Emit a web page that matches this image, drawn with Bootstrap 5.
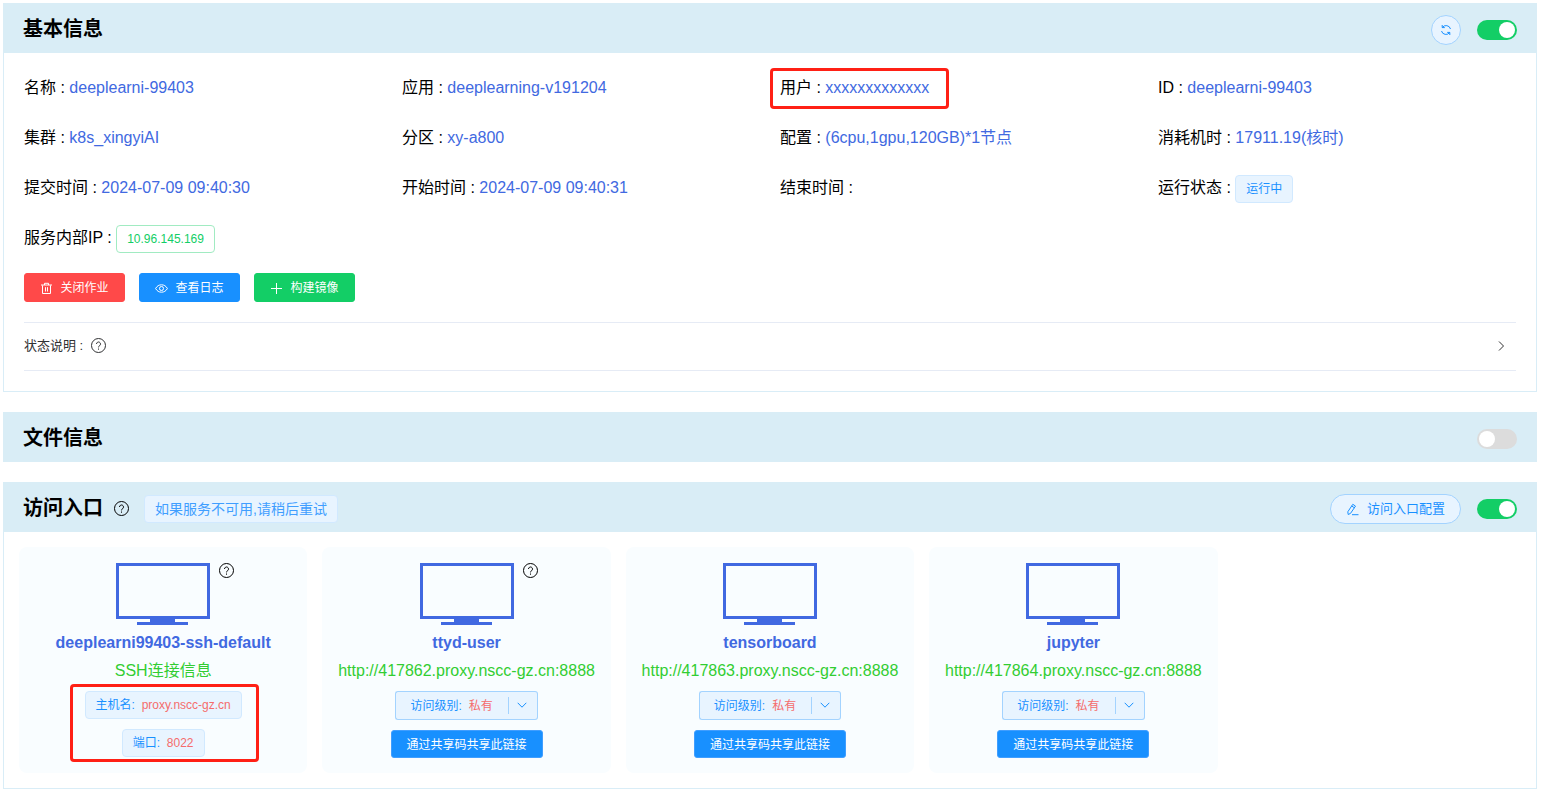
<!DOCTYPE html>
<html lang="zh-CN">
<head>
<meta charset="utf-8">
<meta name="viewport" content="width=device-width, initial-scale=1">
<title>作业详情</title>
<link href="https://cdn.jsdelivr.net/npm/bootstrap@5.3.0/dist/css/bootstrap.min.css" rel="stylesheet">
<style>
  :root { --blue: #1890ff; --royal: #4169e1; --line: #d9edf7; }
  body { font-family: "Liberation Sans", "Noto Sans CJK SC", sans-serif; font-size: 16px; color: #000; padding: 3px 4px 3px 3px; }
  a { text-decoration: none; }
  .panel { margin-bottom: 20px; }
  .panel-head { background: #d9edf6; min-height: 50px; padding: 0 20px; }
  .panel-head h2 { font-size: 20px; line-height: 48px; padding-top: 2px; font-weight: 700; margin: 0; }
  .panel-body { border: 1px solid var(--line); border-top: 0; }
  .head-tools { padding-top: 4px; gap: 16px; }

  .form-check-input.toggle { width: 40px; height: 20px; margin: 0; border: 0; border-radius: 10px; background-color: #dcdcdc; background-size: 20px 20px; background-position: left center; background-repeat: no-repeat;
    background-image: url("data:image/svg+xml,%3csvg xmlns='http://www.w3.org/2000/svg' viewBox='0 0 20 20'%3e%3ccircle cx='10' cy='10' r='8' fill='%23fff'/%3e%3c/svg%3e"); }
  .form-check-input.toggle:checked { background-color: #13ce66; background-position: right center; }

  .info { padding: 10px 20px 20px; }
  .info-grid { --bs-gutter-x: 20px; line-height: 50px; }
  .val { color: var(--royal); }
  .chip { display: inline-block; font-size: 12px; line-height: 26px; padding: 0 10px; border: 1px solid #d1e9ff; border-radius: 4px; background: #e8f4ff; color: var(--blue); white-space: nowrap; }
  .chip-ok { background: #fff; border-color: #a1ebc2; color: #13ce66; }
  .chip-hint { font-size: 14px; line-height: 26px; padding: 0 10px; color: #409eff; }
  .red { color: #f56c6c; }

  .actions { gap: 14px; padding-top: 10px; }
  .act { --c: var(--blue); display: inline-flex; align-items: center; justify-content: center; gap: 7px; font-size: 12px; line-height: 25px; padding: 2px 15px 0; border: 1px solid var(--c); border-radius: 3px; background: var(--c); color: #fff; white-space: nowrap; }
  .act svg { margin-top: -1px; }
  .actions .act { min-width: 101px; }
  .act-danger { --c: #ff4949; }
  .act-ok { --c: #13ce66; }
  .soft { border-color: #a3d3ff; background: #e8f4ff; color: var(--blue); }
  .act-config { font-size: 13px; line-height: 28px; padding: 0 15px; gap: 8px; border-radius: 15px; }
  .act-round { width: 30px; height: 30px; padding: 0; border-radius: 50%; }
  .act-share { line-height: 24px; border-color: #409eff; }

  .status-row { font-size: 13px; line-height: 45px; color: #303133; margin-top: 20px; padding: 0 10px 2px 0; border: solid #e6ebf5; border-width: 1px 0; background: none; }
  svg { flex: none; display: block; fill: none; stroke: currentColor; }

  .marked { position: relative; display: inline-block; }
  .marked::after { content: ""; position: absolute; inset: -7px -17px -5px -15px; border: 3px solid #ff2015; border-radius: 4px; pointer-events: none; }
  .marked-user { line-height: 30px; }
  .marked-user::after { inset: -5px -20px -6px -10px; }

  .entries { padding: 15px; }
  .entries .row { --bs-gutter-x: 15px; }
  .entry { background: #f9fdff; border-radius: 8px; padding: 16px 8px 14px; min-height: 226px; text-align: center; height: 100%; }
  .entry h3 { font-size: 16px; line-height: 20px; font-weight: 700; color: var(--royal); margin: 8px 0; }
  .entry .link { display: block; line-height: 20px; color: #32cd32; margin-bottom: 10px; }
  .screen { position: relative; width: 94px; color: var(--royal); }
  .screen .help { position: absolute; left: 103px; top: 0; color: #000; }
  .title-help { margin: 2px 15px 0 11px; }
  .stack { gap: 10px; }
  .split .act:first-child { border-right: 0; border-radius: 3px 0 0 3px; gap: 7px; padding-left: 14px; }
  .split .act:last-child { border-left: 0; border-radius: 0 3px 3px 0; padding: 0 10px 0 0; gap: 8px; }
  .split .act:last-child::before { content: ""; width: 1px; height: 17px; background: #a3d3ff; }
</style>
</head>
<body>

<svg class="d-none" aria-hidden="true">
  <symbol id="help" viewBox="0 0 15 15"><circle cx="7.5" cy="7.5" r="7"/><path d="M5.500 6a2 2 0 1 1 3.200 1.600C7.900 8.200 7.500 8.500 7.500 9.400M7.500 10.500v1.200"/></symbol>
  <symbol id="chev" viewBox="0 0 10 10"><path d="M.7 2.800 5 7.200l4.300-4.400"/></symbol>
  <symbol id="screen" viewBox="0 0 94 62"><path d="M1.500 1.500h91v53h-91z" stroke-width="3"/><path d="M34 55h25v4h13v3H21v-3h13z" fill="currentColor" stroke="none"/></symbol>
</svg>

<section class="panel">
  <header class="panel-head d-flex justify-content-between align-items-center">
    <h2>基本信息</h2>
    <div class="head-tools d-flex align-items-center">
      <button type="button" class="act soft act-round" aria-label="刷新">
        <svg class="m-0" width="12" height="12" viewBox="0 0 12 12"><path d="M2.200 1v2.600h2.600M9.800 11V8.400H7.200M2.300 3.500A4.600 4.600 0 0 1 10.500 5M9.700 8.500A4.600 4.600 0 0 1 1.500 7"/></svg>
      </button>
      <input class="form-check-input toggle" type="checkbox" role="switch" aria-label="显示基本信息" checked>
    </div>
  </header>
  <div class="panel-body info">
    <div class="row info-grid row-cols-4">
      <div class="col">名称 : <span class="val">deeplearni-99403</span></div>
      <div class="col">应用 : <span class="val">deeplearning-v191204</span></div>
      <div class="col"><span class="marked marked-user">用户 : <span class="val">xxxxxxxxxxxxx</span></span></div>
      <div class="col">ID : <span class="val">deeplearni-99403</span></div>
      <div class="col">集群 : <span class="val">k8s_xingyiAI</span></div>
      <div class="col">分区 : <span class="val">xy-a800</span></div>
      <div class="col">配置 : <span class="val">(6cpu,1gpu,120GB)*1节点</span></div>
      <div class="col">消耗机时 : <span class="val">17911.19(核时)</span></div>
      <div class="col">提交时间 : <span class="val">2024-07-09 09:40:30</span></div>
      <div class="col">开始时间 : <span class="val">2024-07-09 09:40:31</span></div>
      <div class="col">结束时间 :</div>
      <div class="col">运行状态 : <span class="chip">运行中</span></div>
      <div class="col">服务内部IP : <span class="chip chip-ok">10.96.145.169</span></div>
    </div>
    <div class="actions d-flex flex-wrap">
      <button type="button" class="act act-danger"><svg width="13" height="13" viewBox="0 0 13 13"><path d="M1 3h11M4.500 3V1.300h4V3M2.500 3.400v8.100h8V3.400M5.500 5.200v4.300M7.500 5.200v4.300"/></svg>关闭作业</button>
      <button type="button" class="act"><svg width="13" height="13" viewBox="0 0 13 13"><path d="M.6 6.500C2 4 4 2.800 6.500 2.800S11 4 12.400 6.500C11 9 9 10.200 6.500 10.200S2 9 .6 6.500z"/><circle cx="6.500" cy="6.500" r="2"/></svg>查看日志</button>
      <button type="button" class="act act-ok"><svg width="13" height="13" viewBox="0 0 13 13"><path d="M6.500 1v11M1 6.500h11"/></svg>构建镜像</button>
    </div>
    <button type="button" class="status-row w-100 d-flex align-items-center justify-content-between" aria-expanded="false">
      <span class="d-flex align-items-center">状态说明 : <svg class="ms-2" width="15" height="15"><use href="#help"/></svg></span>
      <svg width="10" height="10" viewBox="0 0 10 10"><path d="M3 .5 7.500 5 3 9.500"/></svg>
    </button>
  </div>
</section>

<section class="panel">
  <header class="panel-head d-flex justify-content-between align-items-center">
    <h2>文件信息</h2>
    <div class="head-tools d-flex"><input class="form-check-input toggle" type="checkbox" role="switch" aria-label="显示文件信息"></div>
  </header>
</section>

<section class="panel mb-0">
  <header class="panel-head d-flex justify-content-between align-items-center">
    <div class="d-flex align-items-center">
      <h2>访问入口</h2>
      <svg class="title-help" width="15" height="15"><use href="#help"/></svg>
      <span class="chip chip-hint mt-1">如果服务不可用,请稍后重试</span>
    </div>
    <div class="head-tools d-flex align-items-center">
      <button type="button" class="act soft act-config"><svg class="m-0" width="13" height="13" viewBox="0 0 13 13"><path d="M2.200 11.500 1.800 8.800 6.800 1.300 9.500 3.100 4.500 10.400zM5.700 3l2.700 1.800M6 11.700h6.500"/></svg>访问入口配置</button>
      <input class="form-check-input toggle" type="checkbox" role="switch" aria-label="显示访问入口" checked>
    </div>
  </header>
  <div class="panel-body entries">
    <div class="row row-cols-5">
      <div class="col"><article class="entry">
        <div class="screen mx-auto"><svg width="94" height="62"><use href="#screen"/></svg><svg class="help" width="15" height="15"><use href="#help"/></svg></div>
        <h3>deeplearni99403-ssh-default</h3>
        <a class="link" href="#">SSH连接信息</a>
        <div class="marked"><div class="stack d-flex flex-column align-items-center">
          <span class="chip">主机名: &nbsp;<span class="red">proxy.nscc-gz.cn</span></span>
          <span class="chip">端口: &nbsp;<span class="red">8022</span></span>
        </div></div>
      </article></div>
      <div class="col"><article class="entry">
        <div class="screen mx-auto"><svg width="94" height="62"><use href="#screen"/></svg><svg class="help" width="15" height="15"><use href="#help"/></svg></div>
        <h3>ttyd-user</h3>
        <a class="link" href="#">http://417862.proxy.nscc-gz.cn:8888</a>
        <div class="stack d-flex flex-column align-items-center">
          <div class="split d-flex"><button type="button" class="act soft">访问级别: <span class="red">私有</span></button><button type="button" class="act soft" aria-label="选择访问级别"><svg width="10" height="10"><use href="#chev"/></svg></button></div>
          <button type="button" class="act act-share">通过共享码共享此链接</button>
        </div>
      </article></div>
      <div class="col"><article class="entry">
        <div class="screen mx-auto"><svg width="94" height="62"><use href="#screen"/></svg></div>
        <h3>tensorboard</h3>
        <a class="link" href="#">http://417863.proxy.nscc-gz.cn:8888</a>
        <div class="stack d-flex flex-column align-items-center">
          <div class="split d-flex"><button type="button" class="act soft">访问级别: <span class="red">私有</span></button><button type="button" class="act soft" aria-label="选择访问级别"><svg width="10" height="10"><use href="#chev"/></svg></button></div>
          <button type="button" class="act act-share">通过共享码共享此链接</button>
        </div>
      </article></div>
      <div class="col"><article class="entry">
        <div class="screen mx-auto"><svg width="94" height="62"><use href="#screen"/></svg></div>
        <h3>jupyter</h3>
        <a class="link" href="#">http://417864.proxy.nscc-gz.cn:8888</a>
        <div class="stack d-flex flex-column align-items-center">
          <div class="split d-flex"><button type="button" class="act soft">访问级别: <span class="red">私有</span></button><button type="button" class="act soft" aria-label="选择访问级别"><svg width="10" height="10"><use href="#chev"/></svg></button></div>
          <button type="button" class="act act-share">通过共享码共享此链接</button>
        </div>
      </article></div>
    </div>
  </div>
</section>

<script src="https://cdn.jsdelivr.net/npm/bootstrap@5.3.0/dist/js/bootstrap.bundle.min.js"></script>
</body>
</html>
